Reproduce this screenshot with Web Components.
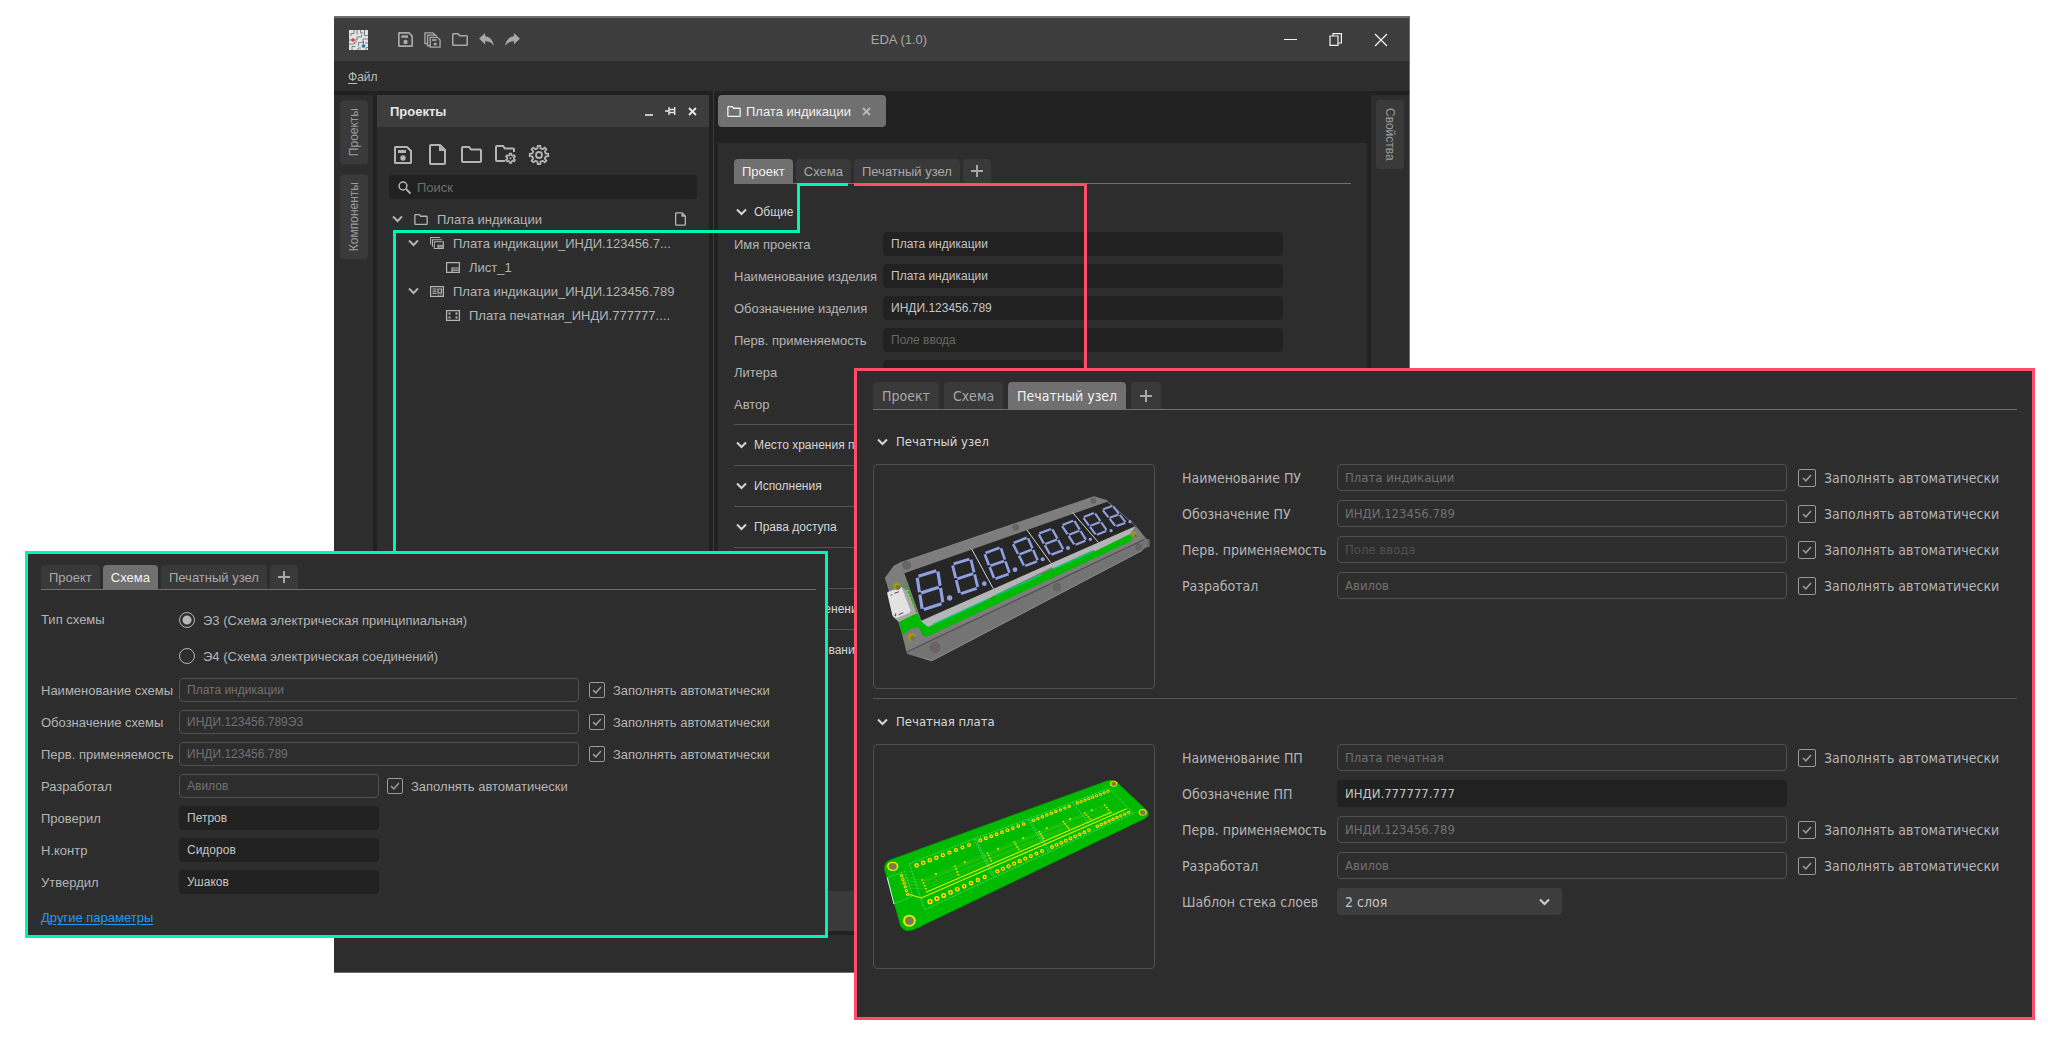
<!DOCTYPE html>
<html lang="ru">
<head>
<meta charset="utf-8">
<title>EDA (1.0)</title>
<style>
  html, body { margin: 0; background: #fff; }
  body {
    position: relative;
    min-height: 100vh;
    overflow: hidden;
    font-family: "Liberation Sans", Arial, sans-serif;
    font-size: 13px;
    color: #b4b4b4;
  }
  /* Floating windows of the overview; later ones lie on top. */
  eda-window { position: absolute; top: 16px; bottom: 67px; left: 334px; right: 646px; }
  callout-lines { position: absolute; inset: 0; }
  callout-panel.schema { position: absolute; top: 551px; left: 25px; right: 1228px; }
  callout-panel.board { position: absolute; top: 368px; left: 854px; right: 21px; }
</style>
</head>
<body>

<eda-window>
  <eda-titlebar slot="top">EDA (1.0)</eda-titlebar>
  <eda-menubar slot="top"></eda-menubar>
  <eda-rail slot="left" items="Проекты|Компоненты"></eda-rail>
  <project-panel slot="projects"></project-panel>
  <editor-area slot="editor"></editor-area>
  <eda-rail slot="right" side="right" items="Свойства"></eda-rail>
</eda-window>

<callout-lines></callout-lines>

<callout-panel class="schema" tone="green">
  <eda-tabs active="1"></eda-tabs>
  <schema-form></schema-form>
</callout-panel>

<callout-panel class="board" tone="red">
  <eda-tabs active="2"></eda-tabs>
  <eda-section heading="Печатный узел" first>
    <board-row>
      <board-preview slot="preview" kind="assembly"></board-preview>
      <form-field label="Наименование ПУ" value="Плата индикации" outlined auto></form-field>
      <form-field label="Обозначение ПУ" value="ИНДИ.123456.789" outlined auto></form-field>
      <form-field label="Перв. применяемость" placeholder="Поле ввода" outlined auto></form-field>
      <form-field label="Разработал" value="Авилов" outlined auto></form-field>
    </board-row>
  </eda-section>
  <eda-section heading="Печатная плата">
    <board-row>
      <board-preview slot="preview" kind="bare"></board-preview>
      <form-field label="Наименование ПП" value="Плата печатная" outlined auto></form-field>
      <form-field label="Обозначение ПП" value="ИНДИ.777777.777"></form-field>
      <form-field label="Перв. применяемость" value="ИНДИ.123456.789" outlined auto></form-field>
      <form-field label="Разработал" value="Авилов" outlined auto></form-field>
      <form-field label="Шаблон стека слоев" options="2 слоя|4 слоя|6 слоев"></form-field>
    </board-row>
  </eda-section>
</callout-panel>

<script>
const BASE = `
  :host, *, *::before, *::after { box-sizing: border-box; }
  button, input, select { font: inherit; color: inherit; margin: 0; border: 0; background: none; padding: 0; }
  button { cursor: pointer; }
`;

function define(name, css, render) {
  customElements.define(name, class extends HTMLElement {
    connectedCallback() {
      if (this.shadowRoot) return;
      const root = this.attachShadow({ mode: 'open' });
      root.innerHTML = `<style>${BASE}${css}</style>${render(this)}`;
    }
  });
}

/* ---------- icons ---------- */

function gear(cx, cy, outer, inner, teeth) {
  const pts = [];
  const step = Math.PI * 2 / teeth;
  for (let i = 0; i < teeth; i++) {
    const a = i * step - Math.PI / 2;
    for (const [k, r] of [[-0.30, inner], [-0.17, outer], [0.17, outer], [0.30, inner]]) {
      pts.push((cx + r * Math.cos(a + k * step)).toFixed(2) + ' ' + (cy + r * Math.sin(a + k * step)).toFixed(2));
    }
  }
  return 'M' + pts.join('L') + 'Z';
}

const SAVE = `<path d="M2 1h11l4 4v11.500q0 .5-.5.500H1.500q-.5 0-.5-.500V1.500q0-.5.500-.5z"/><path class="f" d="M4 4h8v3H4z"/><circle class="f" cx="9" cy="12" r="2.700"/>`;
const ICONS = {
  save: [18, 18, SAVE],
  saveall: [19, 18, `<g stroke-width="1.500"><path d="M4 13H1V1h9l2 2M7 15.500H4V3.500h9l1.500 1.500"/><path d="M7 6h8l3 3v8H7z"/></g><path class="f" d="M9 8h5v2H9z"/><circle class="f" cx="12.500" cy="13.500" r="1.800"/>`],
  file: [17, 21, `<path d="M2 1h9l5 5v13q0 1-1 1H2q-1 0-1-1V2q0-1 1-1z"/><path class="f" d="M10 1l6 6h-6z"/>`],
  folder: [21, 17, `<path d="M2 1h6l2 2.500h9q1 0 1 1V15q0 1-1 1H2q-1 0-1-1V2q0-1 1-1z"/>`],
  foldergear: [21, 19, `<path d="M10 16H2q-1 0-1-1V2q0-1 1-1h6l2 2.500h8q1 0 1 1V7"/><path stroke-width="1.600" d="${gear(15.5, 13.3, 4.8, 3.3, 6)}"/><circle class="f" cx="15.500" cy="13.300" r="1"/>`],
  gear: [20, 20, `<path stroke-width="1.800" d="${gear(10, 10, 9.3, 6.8, 8)}"/><circle cx="10" cy="10" r="3" stroke-width="1.800"/>`],
  undo: [16, 14, `<path class="f" d="M0 6L6.500 0v3.500C12 4 15 8 16 14c-2.500-3.500-5-5-9.500-5v3.500z"/>`],
  redo: [16, 14, `<path class="f" d="M16 6L9.500 0v3.500C4 4 1 8 0 14c2.500-3.500 5-5 9.500-5v3.500z"/>`],
  minimize: [13, 13, `<path class="crisp" stroke-width="1" d="M0 6.500h13"/>`],
  restore: [13, 13, `<path stroke-width="1.200" d="M1 3h8v9.400H1zM4 3V.6h8.400V10H9"/>`],
  close: [14, 14, `<path stroke-width="1.300" d="M1 1l12 12M13 1L1 13"/>`],
  dash: [8, 10, `<path stroke-width="1.600" d="M0 9h8"/>`],
  pin: [11, 10, `<path stroke-width="1.400" d="M0 5h4M4 1v8M4 3.500h5.500M4 6.500h5.500M9.700 1v8"/>`],
  cross: [9, 9, `<path stroke-width="1.900" d="M1 1l7 7M8 1L1 8"/>`],
  search: [13, 13, `<circle cx="5" cy="5" r="3.900" stroke-width="1.500"/><path stroke-width="1.800" d="M8 8l4.500 4.500"/>`],
  chevron: [11, 8, `<path stroke-width="2" d="M1 1.500l4.500 4.500 4.500-4.500"/>`],
  plus: [12, 12, `<path class="crisp" stroke-width="1.500" d="M6 0v12M0 6h12"/>`],
  sheets: [15, 13, `<g stroke-width="1.100"><path d="M11 .6H.6V8M13 3H2.600v7.500"/><path d="M4.600 5.200h9.800v7.200H4.600z"/><path d="M8.500 12.400V9h5.900M8.500 10.700h5.900"/></g>`],
  sheet: [14, 11, `<g stroke-width="1.200"><path d="M.6.6h12.800v9.800H.6z"/><path d="M6 10.400V6h7.400M6 8.200h7.400"/></g>`],
  unit: [14, 11, `<g stroke-width="1.200"><path d="M.6.6h12.800v9.800H.6z"/><path d="M2.500 3h4M2.500 5.200h4M2.500 7.400h4M8 3h3.500v3.800H8zM8 8.800h1M10.500 8.800h1"/></g>`],
  pcb: [14, 11, `<path stroke-width="1.300" d="M.6.6h12.800v9.800H.6z"/><path class="f" d="M2.500 2.500h2v2h-2zM9.500 2.500h2v2h-2zM2.500 6.500h2v2h-2zM9.500 6.500h2v2h-2z"/>`],
  app: [19, 20, `<path fill="#e2e2e2" stroke="none" d="M0 0h19v20H0z"/><g stroke="#6a6a6a" stroke-width=".8"><path d="M5 0v3.500H2V6M8 0v4.500M11.500 0v3h3M15.500 0v5.500H19M0 10h3M5.500 10H8V7h4.500V4.500M19 9h-5v3.500H9.500V16M0 14h5.500v-2H8M3 20v-3.500h3.500M9 20v-2h3M14.500 14v-3M19 13h-3M17 20v-2.500h2"/></g><circle cx="4" cy="10" r="1.700" fill="#d04040" stroke="none"/><circle cx="14.500" cy="16" r="1.800" fill="#1f6cb0" stroke="none"/>`]
};

define('eda-icon', `
  :host { display: inline-flex; flex: none; }
  svg { display: block; fill: none; stroke: currentColor; stroke-width: 2; overflow: visible; }
  .f { fill: currentColor; stroke: none; }
  .crisp { shape-rendering: crispEdges; }
`, el => {
  const [w, h, body] = ICONS[el.getAttribute('name')];
  const width = +(el.getAttribute('w') || w);
  return `<svg width="${width}" height="${Math.round(h * width / w)}" viewBox="0 0 ${w} ${h}" aria-hidden="true">${body}</svg>`;
});

/* ---------- main window ---------- */

define('eda-window', `
  :host { display: flex; flex-direction: column; background: #212121;
    border: 1px solid #6e6e6e; border-width: 2px 1px 1px 0; }
  .work { flex: 1; min-height: 0; display: flex; gap: 4px; padding-top: 4px; }
  .left { display: flex; flex: none; width: 39px; }
  .projects { display: flex; flex: none; width: 332px; }
  .split { flex: none; width: 1px; margin-top: -4px; background: #3c3c3c; }
  .editor { display: flex; flex: 1; min-width: 0; }
  .right { display: flex; flex: none; width: 38px; }
  .status { flex: none; height: 37px; margin-top: 4px; background: #2d2d2d; }
`, () => `
  <slot name="top"></slot>
  <div class="work">
    <div class="left"><slot name="left"></slot></div>
    <div class="projects"><slot name="projects"></slot></div>
    <div class="split"></div>
    <div class="editor"><slot name="editor"></slot></div>
    <div class="right"><slot name="right"></slot></div>
  </div>
  <div class="status"></div>
`);

define('eda-titlebar', `
  :host { display: flex; align-items: center; flex: none; height: 43px; padding: 0 21px 0 15px; background: #3d3d3d; color: #a8a8a8; }
  .tools { display: flex; align-items: center; gap: 11px; margin-left: 30px; }
  button { display: flex; }
  .title { flex: 1; text-align: center; padding-right: 6px; }
  .win { display: flex; align-items: center; gap: 32px; color: #f2f2f2; }
`, () => `
  <eda-icon name="app"></eda-icon>
  <div class="tools">
    <button aria-label="Сохранить"><eda-icon name="save" w="15"></eda-icon></button>
    <button aria-label="Сохранить все"><eda-icon name="saveall" w="17"></eda-icon></button>
    <button aria-label="Открыть"><eda-icon name="folder" w="16"></eda-icon></button>
    <button aria-label="Отменить"><eda-icon name="undo" w="15"></eda-icon></button>
    <button aria-label="Повторить"><eda-icon name="redo" w="15"></eda-icon></button>
  </div>
  <div class="title"><slot></slot></div>
  <div class="win">
    <button aria-label="Свернуть"><eda-icon name="minimize"></eda-icon></button>
    <button aria-label="Развернуть"><eda-icon name="restore"></eda-icon></button>
    <button aria-label="Закрыть"><eda-icon name="close"></eda-icon></button>
  </div>
`);

define('eda-menubar', `
  :host { display: flex; align-items: center; flex: none; height: 30px; padding: 2px 14px 0; background: #2d2d2d; color: #bdbdbd; font-size: 12px; }
  u { text-underline-offset: 2px; }
`, () => `<button><u>Ф</u>айл</button>`);

define('eda-rail', `
  :host { display: flex; flex: 1; flex-direction: column; align-items: center; gap: 10px; padding-top: 5px; background: #2d2d2d; }
  button { width: 28px; padding: 8px 0; border-radius: 4px; background: #3a3a3a; color: #9c9c9c;
    font-size: 12px; line-height: 28px; writing-mode: vertical-rl; white-space: nowrap; }
  :host(:not([side])) button { transform: rotate(180deg); }
`, el => el.getAttribute('items').split('|').map(t => `<button>${t}</button>`).join(''));

/* ---------- project tree ---------- */

define('tree-row', `
  :host { display: flex; align-items: center; gap: 9px; height: 24px; padding: 0 11px 0 calc(3px + 16px * var(--level, 0)); }
  eda-icon { color: #b4b4b4; }
  .twist { width: 13px; display: flex; }
  .name { flex: 1; white-space: nowrap; }
`, el => `
  <span class="twist">${el.hasAttribute('leaf') ? '' : '<eda-icon name="chevron"></eda-icon>'}</span>
  <eda-icon name="${el.getAttribute('icon')}" w="14"></eda-icon>
  <span class="name"><slot></slot></span>
  ${el.hasAttribute('page') ? '<eda-icon name="file" w="11"></eda-icon>' : ''}
`);

define('project-panel', `
  :host { display: flex; flex: 1; flex-direction: column; background: #2d2d2d; }
  header { display: flex; align-items: center; gap: 12px; height: 32px; padding: 0 12px 0 13px; background: #3d3d3d; color: #e6e6e6; }
  h2 { flex: 1; margin: 0; font-size: 13px; font-weight: bold; }
  header button, .tools button { display: flex; }
  .tools { display: flex; align-items: center; height: 39px; margin: 8px 9px 1px; }
  .tools button { justify-content: center; width: 34px; }
  .search { display: flex; align-items: center; gap: 6px; height: 24px; margin: 0 12px 8px; padding: 0 9px;
    border-radius: 4px; background: #212121; }
  .search input { flex: 1; min-width: 0; outline: 0; }
  .search input::placeholder { color: #6e6e6e; opacity: 1; }
  .tree { margin: 0 12px; }
`, () => `
  <header>
    <h2>Проекты</h2>
    <button aria-label="Свернуть"><eda-icon name="dash"></eda-icon></button>
    <button aria-label="Закрепить"><eda-icon name="pin"></eda-icon></button>
    <button aria-label="Закрыть"><eda-icon name="cross"></eda-icon></button>
  </header>
  <div class="tools">
    <button aria-label="Сохранить"><eda-icon name="save"></eda-icon></button>
    <button aria-label="Новый проект"><eda-icon name="file"></eda-icon></button>
    <button aria-label="Открыть"><eda-icon name="folder"></eda-icon></button>
    <button aria-label="Параметры папки"><eda-icon name="foldergear"></eda-icon></button>
    <button aria-label="Настройки"><eda-icon name="gear"></eda-icon></button>
  </div>
  <label class="search"><eda-icon name="search"></eda-icon><input type="search" placeholder="Поиск"></label>
  <div class="tree">
    <tree-row icon="folder" page>Плата индикации</tree-row>
    <tree-row icon="sheets" style="--level:1">Плата индикации_ИНДИ.123456.7...</tree-row>
    <tree-row icon="sheet" style="--level:2" leaf>Лист_1</tree-row>
    <tree-row icon="unit" style="--level:1">Плата индикации_ИНДИ.123456.789</tree-row>
    <tree-row icon="pcb" style="--level:2" leaf>Плата печатная_ИНДИ.777777....</tree-row>
  </div>
`);

/* ---------- tabs, sections and fields ---------- */

define('eda-tabs', `
  :host { display: flex; gap: var(--tab-gap, 3px); border-bottom: 1px solid #6f6f6f; }
  button { display: flex; align-items: center; height: var(--tab-h, 24px); padding: 0 var(--tab-pad, 8px);
    border-radius: 4px 4px 0 0; background: #393939; color: #a8a8a8; white-space: nowrap; }
  button[aria-selected="true"] { background: #707070; color: #f2f2f2; }
`, el => {
  const active = +el.getAttribute('active');
  return ['Проект', 'Схема', 'Печатный узел']
    .map((t, i) => `<button role="tab" aria-selected="${i === active}">${t}</button>`).join('')
    + '<button aria-label="Добавить"><eda-icon name="plus"></eda-icon></button>';
});

define('eda-section', `
  :host { display: block; border-top: 1px solid #555; padding-bottom: var(--sec-end, 0px); }
  :host([first]) { border-color: transparent; margin-top: var(--sec-start, 7px); }
  button { display: flex; align-items: center; gap: var(--sec-gap, 7px); height: var(--sec-h, 40px); padding: 0 var(--sec-pad, 2px);
    font-size: var(--sec-fs, 12px); color: #d6d6d6; white-space: nowrap; }
`, el => `
  <button aria-expanded="true"><eda-icon name="chevron"></eda-icon>${el.getAttribute('heading')}</button>
  <slot></slot>
`);

define('form-field', `
  :host { display: flex; align-items: center; height: var(--field-h, 24px); }
  .name { flex: none; width: var(--label-w, 149px); white-space: nowrap; }
  .box { flex: 0 1 var(--field-w, 400px); min-width: 0; height: 100%; padding: 0 7px; border-radius: 4px;
    background: #212121; border: 1px solid #212121; color: #c4c4c4; font-size: var(--input-fs, 12px); outline: 0; }
  .box::placeholder { color: #666; opacity: 1; }
  :host([half]) .box { flex-basis: 200px; }
  :host([outlined]) .box { background: none; border-color: #505050; color: #707070; }
  :host([outlined]) .box::placeholder { color: #505050; }
  .auto { display: flex; align-items: center; gap: 8px; margin-left: var(--auto-gap, 10px); white-space: nowrap; }
  :host([half]) .auto { margin-left: 8px; }
  .tick, .drop { display: grid; align-items: center; }
  .tick > *, .drop > * { grid-area: 1 / 1; }
  .tick input { appearance: none; width: var(--tick, 16px); height: var(--tick, 16px); border: 1px solid #9a9a9a; border-radius: 2px; }
  .tick svg { justify-self: center; pointer-events: none; visibility: hidden; }
  .tick input:checked + svg { visibility: visible; }
  .drop { width: 225px; height: 100%; }
  .drop select { appearance: none; width: 100%; height: 100%; padding: 0 8px; border-radius: 4px; background: #3d3d3d; color: #c4c4c4; outline: 0; }
  .drop eda-icon { justify-self: end; margin-right: 12px; color: #d0d0d0; pointer-events: none; }
`, el => {
  const get = n => el.getAttribute(n) || '';
  const control = el.hasAttribute('options')
    ? `<span class="drop"><select id="c">${get('options').split('|').map(o => `<option>${o}</option>`).join('')}</select><eda-icon name="chevron"></eda-icon></span>`
    : `<input class="box" id="c" type="text" value="${get('value')}" placeholder="${get('placeholder')}"${el.hasAttribute('outlined') ? ' readonly' : ''}>`;
  const auto = el.hasAttribute('auto')
    ? `<label class="auto"><span class="tick"><input type="checkbox" checked><svg width="10" height="8" viewBox="0 0 10 8"><path d="M1 4l2.800 2.800L9 1" fill="none" stroke="#9c9c9c" stroke-width="1.500"/></svg></span>Заполнять автоматически</label>`
    : '';
  return `<label class="name" for="c">${get('label')}</label>${control}${auto}`;
});

define('editor-area', `
  :host { display: flex; flex: 1; flex-direction: column; min-width: 0; }
  .doc { display: flex; align-items: center; gap: 5px; align-self: flex-start; height: 32px; padding: 0 15px 0 9px;
    border-radius: 4px; background: #707070; color: #f2f2f2; }
  .doc button { display: flex; margin-left: 6px; color: #b9b9b9; }
  .pane { flex: 1; min-height: 0; overflow: hidden; margin-top: 16px; padding: 16px 16px 0; background: #2d2d2d; }
  .fields { display: flex; flex-direction: column; gap: 8px; padding-bottom: 8px; }
  .foot { flex: none; height: 40px; background: #3a3a3a; }
`, () => `
  <div class="doc"><eda-icon name="folder" w="14"></eda-icon>Плата индикации<button aria-label="Закрыть"><eda-icon name="cross"></eda-icon></button></div>
  <div class="pane">
    <eda-tabs active="0"></eda-tabs>
    <eda-section heading="Общие" first>
      <div class="fields">
        <form-field label="Имя проекта" value="Плата индикации"></form-field>
        <form-field label="Наименование изделия" value="Плата индикации"></form-field>
        <form-field label="Обозначение изделия" value="ИНДИ.123456.789"></form-field>
        <form-field label="Перв. применяемость" placeholder="Поле ввода"></form-field>
        <form-field label="Литера" half></form-field>
        <form-field label="Автор" half></form-field>
      </div>
    </eda-section>
    <eda-section heading="Место хранения проекта"></eda-section>
    <eda-section heading="Исполнения"></eda-section>
    <eda-section heading="Права доступа"></eda-section>
    <eda-section heading="Подписи"></eda-section>
    <eda-section heading="История изменений"></eda-section>
    <eda-section heading="Схема именования"></eda-section>
  </div>
  <div class="foot"></div>
`);

/* ---------- callouts ---------- */

define('callout-lines', `
  :host { display: block; pointer-events: none; }
  svg { display: block; width: 100%; height: 100%; fill: none; stroke-width: 3; shape-rendering: crispEdges; }
`, () => `
  <svg aria-hidden="true">
    <path stroke="#00f5b0" d="M848 184.500H798.500V231.500H394.500V552"/>
    <path stroke="#ff4d6a" d="M854 184.500H1085.500V369"/>
  </svg>
`);

define('callout-panel', `
  :host { display: block; border: 3px solid; background: #2d2d2d; }
  .in { color: #b4b4b4; padding: 11px 9px 5px 13px; }
  :host([tone="green"]) { border-color: #00f5b0; --label-w: 138px; }
  :host([tone="red"]) { border-color: #ff4d6a; font-family: "DejaVu Sans Condensed", "Liberation Sans", sans-serif; font-size: 14px;
    --tab-h: 27px; --tab-pad: 9px; --tab-gap: 5px; --sec-start: 8px; --sec-h: 45px; --sec-fs: 13px; --sec-end: 9px;
    --sec-gap: 8px; --sec-pad: 4px;
    --label-w: 155px; --field-w: 450px; --field-h: 27px; --input-fs: 13px; --auto-gap: 11px; --tick: 18px; }
  :host([tone="red"]) .in { padding: 11px 15px 39px 16px; }
`, () => `<div class="in"><slot></slot></div>`);

define('schema-form', `
  :host { display: block; padding-top: 12px; }
  fieldset { display: flex; margin: 0 0 4px; padding: 0; border: 0; }
  legend { float: left; width: 138px; padding: 0; line-height: 36px; }
  fieldset div { display: flex; flex-direction: column; }
  fieldset label { display: flex; align-items: center; gap: 8px; height: 36px; }
  input { appearance: none; width: 16px; height: 16px; border: 1px solid #b4b4b4; border-radius: 50%; }
  input:checked { background: radial-gradient(circle, #b4b4b4 4px, transparent 5px); }
  .fields { display: flex; flex-direction: column; gap: 8px; }
  p { margin: 12px 0 0; line-height: 24px; }
  a { color: #1a9cff; text-underline-offset: 2px; }
`, () => `
  <fieldset>
    <legend>Тип схемы</legend>
    <div>
      <label><input type="radio" name="kind" checked>Э3 (Схема электрическая принципиальная)</label>
      <label><input type="radio" name="kind">Э4 (Схема электрическая соединений)</label>
    </div>
  </fieldset>
  <div class="fields">
    <form-field label="Наименование схемы" value="Плата индикации" outlined auto></form-field>
    <form-field label="Обозначение схемы" value="ИНДИ.123456.789Э3" outlined auto></form-field>
    <form-field label="Перв. применяемость" value="ИНДИ.123456.789" outlined auto></form-field>
    <form-field label="Разработал" value="Авилов" half outlined auto></form-field>
    <form-field label="Проверил" value="Петров" half></form-field>
    <form-field label="Н.контр" value="Сидоров" half></form-field>
    <form-field label="Утвердил" value="Ушаков" half></form-field>
  </div>
  <p><a href="#more">Другие параметры</a></p>
`);

define('board-row', `
  :host { display: flex; align-items: flex-start; gap: 27px; }
  .fields { flex: 1; min-width: 0; display: flex; flex-direction: column; gap: 9px; }
`, () => `<slot name="preview"></slot><div class="fields"><slot></slot></div>`);

/* ---------- board drawings ---------- */

const lerp = (a, b, t) => [a[0] + (b[0] - a[0]) * t, a[1] + (b[1] - a[1]) * t];

function digit(tl, tr, br, bl) {
  const ml = lerp(tl, bl, 0.5), mr = lerp(tr, br, 0.5);
  const w = (Math.hypot(br[0] - tr[0], br[1] - tr[1]) * 0.095).toFixed(1);
  const d = [[tl, tr], [ml, mr], [bl, br], [tl, ml], [ml, bl], [tr, mr], [mr, br]].map(([a, b]) => {
    const p = lerp(a, b, 0.07), q = lerp(a, b, 0.93);
    return `M${p[0].toFixed(1)} ${p[1].toFixed(1)}L${q[0].toFixed(1)} ${q[1].toFixed(1)}`;
  }).join('');
  return `<path d="${d}" fill="none" stroke="#8f9fe0" stroke-width="${w}"/>`;
}

function assembly() {
  const digits = [
    [[651, 740], [713, 721], [729, 820], [667, 840]],
    [[757, 703], [812, 686], [834, 774], [779, 792]],
    [[853, 670], [902, 652], [929, 731], [883, 747]],
    [[938, 640], [983, 622], [1014, 693], [973, 709]],
    [[1015, 611], [1056, 596], [1091, 660], [1051, 675]],
    [[1085, 586], [1122, 571], [1159, 631], [1124, 645]],
    [[1149, 562], [1184, 548], [1221, 602], [1188, 615]],
    [[1207, 539], [1238, 527], [1278, 578], [1247, 589]]
  ].map(q => digit(...q)).join('');
  const dots = [[749, 804, 8], [853, 761, 7], [945, 719, 7], [1028, 688, 6], [1104, 654, 6], [1171, 628, 5], [1233, 602, 5], [1290, 575, 5]]
    .map(([x, y, r]) => `<circle cx="${x}" cy="${y}" r="${r}" fill="#8f9fe0"/>`).join('');
  const screws = [[620, 706, 12], [947, 592, 9], [1180, 512, 8], [705, 952, 15], [1071, 771, 11], [1316, 650, 9]]
    .map(([x, y, r]) => `<circle cx="${x}" cy="${y}" r="${r}" fill="#6c6462" stroke="#605c5c" stroke-width="2"/>`).join('');
  const brass = [[591, 769, 11], [636, 922, 12], [1303, 614, 8]]
    .map(([x, y, r]) => `<circle cx="${x}" cy="${y}" r="${r}" fill="#a69c00"/><circle cx="${x + 3}" cy="${y + 3}" r="${r * 0.65}" fill="#77705c"/>`).join('');
  return `<g transform="scale(.33333) translate(-522 -405)">
    <path fill="#6a6a6a" d="M1335 626l14 2v22l-14 4z"/>
    <path fill="#7d7d7d" d="M555 745L582 708 604 697 1182 500 1222 512 1308 588 1340 628 1340 648 1326 662 695 994 620 968 604 905z"/>
    <path fill="#747474" d="M622 966L1338 632 1340 648 1326 662 695 994z"/>
    <path fill="none" stroke="#515151" stroke-width="4" d="M620 966L1334 628"/>
    <path fill="none" stroke="#919191" stroke-width="2" d="M555 745L582 708 604 697 1182 500 1222 512M620 970L695 992 1326 662"/>
    <path fill="#00ba00" d="M612 745L655 860 686 886 1284 614 1298 622 1292 634 684 919Q670 922 665 910L656 892 632 896 608 914 596 874 640 852z"/>
    <path fill="#262626" d="M613 730L1222 515 1308 590 665 873z"/>
    <path fill="#b5b5b5" d="M662 873L1307 588 1290 612 1185 664 1180 660 1060 715 1055 712 880 797 875 801 700 884 684 891z"/>
    <path fill="none" stroke="#00c88a" stroke-width="4" d="M698 884L868 806M885 798L1025 734M1062 716L1180 664"/>
    <path fill="none" stroke="#d5d5d5" stroke-width="3" d="M815 657L880 776M981 600L1052 698M1118 548L1195 637"/>
    <path fill="none" stroke="#efe400" stroke-width="4" stroke-dasharray="4 8" d="M622 780L650 858"/>
    <path fill="#a8a8a8" d="M605 772L622 784 650 850 597 876 583 864z"/>
    <path fill="#e2e2e2" d="M562 792Q560 786 568 784L605 772 632 842Q630 850 620 852L590 864Q580 866 577 856z"/>
    <path fill="none" stroke="#4b4b4b" stroke-width="3" d="M572 796l5-2M583 790l14-5M583 856l4 2v-8M596 854l14-6"/>
    ${digits}${dots}${screws}${brass}
  </g>`;
}

function bare() {
  const row = (x1, y1, x2, y2, n, r1, r2) => Array.from({ length: n }, (_, i) => {
    const t = i / (n - 1), [x, y] = lerp([x1, y1], [x2, y2], t), r = r1 + (r2 - r1) * t;
    return `<circle cx="${x.toFixed(1)}" cy="${y.toFixed(1)}" r="${r.toFixed(1)}" fill="#ffe500"/><circle cx="${x.toFixed(1)}" cy="${y.toFixed(1)}" r="${(r * 0.4).toFixed(1)}" fill="#7a5a20"/>`;
  }).join('');
  const vias = [[157, 420, 168, 446], [255, 379, 265, 404], [352, 339, 364, 362], [433, 306, 446, 328], [508, 275, 520, 295], [580, 245, 596, 265], [644, 219, 660, 237], [704, 195, 722, 217]]
    .map(([a, b, c, d]) => [0, 1, 2, 3].map(i => { const p = lerp([a, b], [c, d], i / 3); return `<circle cx="${p[0].toFixed(1)}" cy="${p[1].toFixed(1)}" r="2.600"/>`; }).join('')).join('')
    + [[198, 402], [284, 367], [384, 326], [460, 295], [530, 265], [600, 237], [665, 211]].map(([x, y]) => `<circle cx="${x}" cy="${y}" r="3"/>`).join('');
  const rings = [[68, 379, 17, 14], [118, 542, 19, 18], [731, 131, 11, 9], [818, 217, 12, 10]]
    .map(([x, y, a, b]) => `<ellipse cx="${x}" cy="${y}" rx="${a}" ry="${b}" fill="#f5ee00"/><ellipse cx="${x}" cy="${y}" rx="${a * 0.7}" ry="${b * 0.7}" fill="#8b8000"/><ellipse cx="${x + 2}" cy="${y + 2}" rx="${a * 0.55}" ry="${b * 0.55}" fill="#7b7474"/>`).join('');
  return `<g transform="scale(.33333) translate(-12 -15)">
    <path fill="#00bb00" stroke="#009c00" stroke-width="2" d="M44 390Q40 368 62 359L710 123Q728 117 741 127L832 213Q840 226 826 235L134 568Q104 580 92 558z"/>
    <g fill="none" stroke="#8bdc2a" stroke-width="1.300" stroke-opacity=".6">
      <path d="M98 412L157 420 704 195M102 422L160 428 706 200M106 432L164 437 712 207M110 444L168 446 718 213M262 398L600 259M160 424L640 227"/>
    </g>
    <path fill="none" stroke="#d8f000" stroke-width="3.500" d="M168 457L724 217M113 462L154 474 770 206"/>
    <g fill="none" stroke="#6fe3a8" stroke-width="2" stroke-dasharray="6 3">
      <path d="M118 371L312 297 370 413 164 509zM312 297L472 238 536 337 370 413M472 238L607 187 675 272 536 337M607 187L717 145 792 220 675 272M318 297L374 409M478 238L541 334"/>
      <path d="M52 413L104 394 128 468 72 492"/>
    </g>
    <path fill="none" stroke="#d9f5e2" stroke-width="3" d="M52 413L72 492"/>
    <g fill="#ffe500">${vias}</g>
    ${row(140, 376, 297, 315, 9, 7, 6)}${row(331, 301, 461, 252, 9, 6, 5.5)}${row(490, 241, 598, 199, 9, 5.5, 5)}${row(622, 189, 714, 154, 9, 5, 4.5)}
    ${row(180, 485, 344, 411, 9, 8, 6.5)}${row(382, 394, 516, 333, 9, 6.5, 6)}${row(546, 321, 657, 270, 9, 6, 5.5)}${row(682, 259, 776, 217, 9, 5.5, 5)}
    ${row(95, 407, 113, 463, 6, 5, 5)}${rings}
  </g>`;
}

define('board-preview', `
  :host { display: block; flex: none; width: 282px; height: 225px; border: 1px solid #505050; border-radius: 4px; }
  svg { display: block; width: 100%; height: 100%; }
`, el => `<svg viewBox="0 0 280 223" role="img" aria-label="Модель платы">${el.getAttribute('kind') === 'bare' ? bare() : assembly()}</svg>`);
</script>
</body>
</html>
